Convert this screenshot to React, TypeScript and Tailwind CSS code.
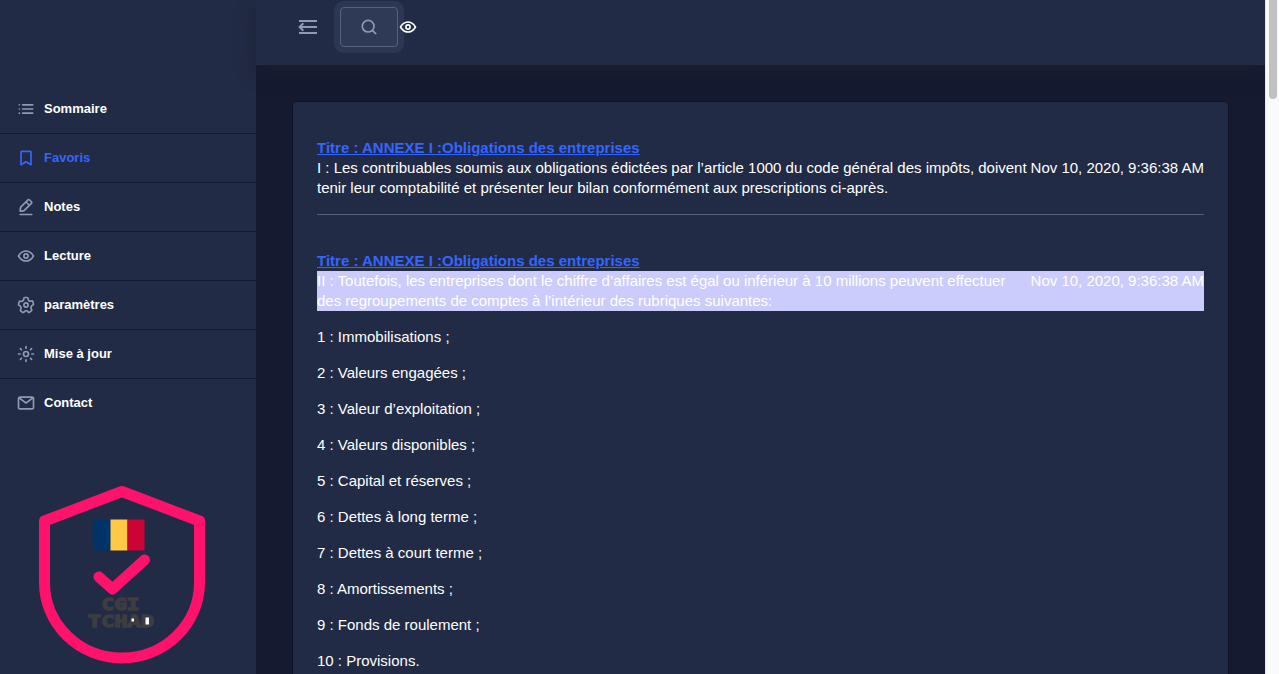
import type { ReactNode } from 'react';

const eye = (
  <>
    <path d="M21.87 11.5c-.64-1.11-4.16-6.68-10.14-6.5-5.53.14-8.73 5-9.6 6.5a1 1 0 0 0 0 1c.63 1.09 4 6.5 9.89 6.5h.25c5.53-.14 8.74-5 9.6-6.5a1 1 0 0 0 0-1zM12.22 17c-4.31.1-7.12-3.59-8-5 1-1.61 3.61-4.9 7.61-5 4.29-.11 7.11 3.59 8 5-1.03 1.61-3.61 4.9-7.61 5z" />
    <path d="M12 8.5a3.5 3.5 0 1 0 3.5 3.5A3.5 3.5 0 0 0 12 8.5zm0 5a1.5 1.5 0 1 1 1.5-1.5 1.5 1.5 0 0 1-1.5 1.5z" />
  </>
);

const items: { label: string; active?: boolean; icon: ReactNode }[] = [
  {
    label: 'Sommaire',
    icon: (
      <>
        <circle cx="4" cy="7" r="1" />
        <circle cx="4" cy="12" r="1" />
        <circle cx="4" cy="17" r="1" />
        <rect x="7" y="11" width="14" height="2" rx=".94" />
        <rect x="7" y="16" width="14" height="2" rx=".94" />
        <rect x="7" y="6" width="14" height="2" rx=".94" />
      </>
    ),
  },
  {
    label: 'Favoris',
    active: true,
    icon: (
      <path
        d="M6 20V5.3A1.25 1.25 0 0 1 7.2 4h9.6A1.25 1.25 0 0 1 18 5.3V20l-6-3.6z"
        fill="none"
        stroke="currentColor"
        strokeWidth="2"
        strokeLinejoin="round"
      />
    ),
  },
  {
    label: 'Notes',
    icon: (
      <>
        <path d="M19 20H5a1 1 0 0 0 0 2h14a1 1 0 0 0 0-2z" />
        <path d="M5 18h.09l4.17-.38a2 2 0 0 0 1.21-.57l9-9a1.92 1.92 0 0 0-.07-2.71L16.66 2.6A2 2 0 0 0 14 2.53l-9 9a2 2 0 0 0-.57 1.21L4 16.91A1 1 0 0 0 5 18zM15.27 4L18 6.73l-2 1.95L13.32 6zm-8.9 8.91L12 7.32l2.7 2.7-5.6 5.6-3 .28z" />
      </>
    ),
  },
  { label: 'Lecture', icon: eye },
  {
    label: 'paramètres',
    icon: (
      <>
        <path d="M8.61 22a2.25 2.25 0 0 1-1.35-.46L5.19 20a2.37 2.37 0 0 1-.49-3.22 2.06 2.06 0 0 0 .23-1.86l-.06-.16a1.83 1.83 0 0 0-1.12-1.22h-.16a2.34 2.34 0 0 1-1.48-2.94L2.93 8a2.18 2.18 0 0 1 1.12-1.41 2.14 2.14 0 0 1 1.68-.12 1.93 1.93 0 0 0 1.78-.29l.13-.1a1.94 1.94 0 0 0 .73-1.51v-.24A2.32 2.32 0 0 1 10.66 2h2.55a2.26 2.26 0 0 1 1.6.67 2.37 2.37 0 0 1 .68 1.68v.28a1.76 1.76 0 0 0 .69 1.43l.11.08a1.74 1.74 0 0 0 1.59.26l.34-.11A2.26 2.26 0 0 1 21.1 7.8l.79 2.52a2.36 2.36 0 0 1-1.46 2.93l-.2.07A1.89 1.89 0 0 0 19 14.6a2 2 0 0 0 .25 1.65l.26.38a2.38 2.38 0 0 1-.5 3.23L17 21.41a2.24 2.24 0 0 1-3.22-.53l-.12-.17a1.75 1.75 0 0 0-1.5-.78 1.8 1.8 0 0 0-1.43.77l-.23.33A2.25 2.25 0 0 1 9 22a2 2 0 0 1-.39 0zM4.4 11.62a3.83 3.83 0 0 1 2.38 2.5v.12a4 4 0 0 1-.46 3.62.38.38 0 0 0 0 .51L8.47 20a.25.25 0 0 0 .37-.07l.23-.33a3.77 3.77 0 0 1 6.2 0l.12.18a.3.3 0 0 0 .18.12.25.25 0 0 0 .19-.05l2.06-1.56a.36.36 0 0 0 .07-.49l-.26-.38A4 4 0 0 1 17.1 14a3.92 3.92 0 0 1 2.49-2.61l.2-.07a.34.34 0 0 0 .19-.44l-.78-2.49a.35.35 0 0 0-.2-.19.21.21 0 0 0-.19 0l-.34.11a3.74 3.74 0 0 1-3.43-.57L15 7.65a3.76 3.76 0 0 1-1.49-3v-.31a.37.37 0 0 0-.1-.26.31.31 0 0 0-.21-.08h-2.54a.31.31 0 0 0-.29.33v.25a3.9 3.9 0 0 1-1.52 3.09l-.13.1a3.91 3.91 0 0 1-3.63.59.22.22 0 0 0-.14 0 .28.28 0 0 0-.12.15L4 11.12a.36.36 0 0 0 .22.45z" />
        <path d="M12 15.5a3.5 3.5 0 1 1 3.5-3.5 3.5 3.5 0 0 1-3.5 3.5zm0-5a1.5 1.5 0 1 0 1.5 1.5 1.5 1.5 0 0 0-1.5-1.5z" />
      </>
    ),
  },
  {
    label: 'Mise à jour',
    icon: (
      <g fill="none" stroke="currentColor" strokeWidth="2" strokeLinecap="round">
        <circle cx="12" cy="12" r="3" />
        <path d="M12 3v2M12 19v2M3 12h2M19 12h2M5.300 5.600l1.300 1.300M17.400 17.100l1.300 1.300M5.300 18.400l1.300-1.300M17.400 6.900l1.300-1.300" />
      </g>
    ),
  },
  {
    label: 'Contact',
    icon: (
      <path d="M19 4H5a3 3 0 0 0-3 3v10a3 3 0 0 0 3 3h14a3 3 0 0 0 3-3V7a3 3 0 0 0-3-3zm-.67 2L12 10.75 5.67 6zM19 18H5a1 1 0 0 1-1-1V7.25l7.4 5.55a1 1 0 0 0 .6.2 1 1 0 0 0 .6-.2L20 7.25V17a1 1 0 0 1-1 1z" />
    ),
  },
];

const rubriques = [
  '1 : Immobilisations ;',
  '2 : Valeurs engagées ;',
  '3 : Valeur d’exploitation ;',
  '4 : Valeurs disponibles ;',
  '5 : Capital et réserves ;',
  '6 : Dettes à long terme ;',
  '7 : Dettes à court terme ;',
  '8 : Amortissements ;',
  '9 : Fonds de roulement ;',
  '10 : Provisions.',
];

function Icon({ children, className }: { children: ReactNode; className: string }) {
  return (
    <svg viewBox="0 0 24 24" fill="currentColor" className={className}>
      {children}
    </svg>
  );
}

function Logo() {
  return (
    <svg width="200" height="190" viewBox="0 0 200 190" className="ml-[25px] mt-[52px] shrink-0">
      <path
        d="M19.5 41 L97 11.500 L174.500 41 V102.500 A77.500 75.500 0 0 1 19.500 102.500 Z"
        fill="none"
        stroke="#ff126a"
        strokeWidth="11"
        strokeLinejoin="round"
      />
      <rect x="69" y="39.500" width="17" height="31" fill="#00336a" />
      <rect x="85.500" y="39.500" width="17" height="31" fill="#ffc846" />
      <rect x="102.500" y="39.500" width="17" height="31" fill="#cc0435" />
      <path d="M74 97 L87.500 109 L119.500 80" fill="none" stroke="#ff126a" strokeWidth="11" strokeLinecap="round" strokeLinejoin="round" />
      <g
        fill="#3d3d40"
        stroke="#3d3d40"
        strokeWidth="1.300"
        fontFamily="'DejaVu Sans Mono', monospace"
        fontWeight="700"
        fontSize="16.500"
      >
        <text x="76.500" y="130" textLength="38" lengthAdjust="spacingAndGlyphs">CGI</text>
        <text x="63" y="147" textLength="66" lengthAdjust="spacingAndGlyphs">TCHAD</text>
      </g>
      <rect x="106.500" y="138.500" width="2.500" height="3" fill="#fff" />
      <rect x="120.500" y="137.500" width="3.500" height="7" fill="#fff" />
    </svg>
  );
}

function EntryTitle() {
  return (
    <a className="block w-[323px] whitespace-nowrap font-bold text-[#3366ff] underline">
      Titre : ANNEXE I :Obligations des entreprises
    </a>
  );
}

export default function App() {
  return (
    <div className="flex h-[674px] w-[1279px] overflow-hidden bg-[#151a30] font-['Liberation_Sans',Arial,sans-serif] text-[15px] leading-5 text-white">
      <aside className="flex w-64 shrink-0 flex-col bg-[#222b45] pt-[85px]">
        <nav>
          {items.map((item, i) => (
            <a
              key={item.label}
              className={`flex h-[49px] items-center gap-2 border-b pl-4 text-[13px] font-bold ${
                i < items.length - 1 ? 'border-[#151a30]' : 'border-transparent'
              } ${item.active ? 'text-[#3366ff]' : 'text-white'}`}
            >
              <Icon className={`size-5 ${item.active ? 'text-[#3366ff]' : 'text-[#8f9bb3]'}`}>{item.icon}</Icon>
              {item.label}
            </a>
          ))}
        </nav>
        <Logo />
      </aside>

      <div className="flex w-[1009px] flex-col">
        <header className="z-10 flex h-[65px] shrink-0 items-start bg-[#222b45] pl-10 pt-[7px] shadow-[0_8px_16px_0_rgba(28,32,48,0.7)]">
          <div className="flex h-10 items-center">
            <svg
              viewBox="0 0 24 24"
              className="size-6 text-[#8f9bb3]"
              fill="none"
              stroke="currentColor"
              strokeWidth="2"
            >
              <path d="M3 6h18M4 12h17M3 18h18" />
              <path d="M7.300 8.300L3.600 12l3.700 3.700" />
            </svg>
            <button className="ml-5 flex h-10 w-[58px] items-center justify-center rounded border border-[#56617d] bg-[#2e3a56] shadow-[0_0_0_6px_#2c3753]">
              <Icon className="size-5 text-[#8f9bb3]">
                <path d="M20.71 19.29l-3.4-3.39A7.92 7.92 0 0 0 19 11a8 8 0 1 0-8 8 7.92 7.92 0 0 0 4.9-1.69l3.39 3.4a1 1 0 0 0 1.42 0 1 1 0 0 0 0-1.42zM5 11a6 6 0 1 1 6 6 6 6 0 0 1-6-6z" />
              </Icon>
            </button>
            <Icon className="z-10 size-5 text-white">{eye}</Icon>
          </div>
        </header>

        <main className="px-9 pt-9">
          <article className="h-[640px] w-[937px] rounded border border-[#101426] bg-[#222b45] px-6 pt-9">
            <EntryTitle />
            <div className="flex justify-between whitespace-nowrap">
              <p>
                I : Les contribuables soumis aux obligations édictées par l’article 1000 du code général des impôts, doivent
                <br />
                tenir leur comptabilité et présenter leur bilan conformément aux prescriptions ci-après.
              </p>
              <time>Nov 10, 2020, 9:36:38 AM</time>
            </div>
            <hr className="mb-9 mt-4 border-[#596075]" />
            <EntryTitle />
            <div className="flex justify-between whitespace-nowrap bg-[#ccccfc]">
              <p>
                II : Toutefois, les entreprises dont le chiffre d’affaires est égal ou inférieur à 10 millions peuvent effectuer
                <br />
                des regroupements de comptes à l’intérieur des rubriques suivantes:
              </p>
              <time>Nov 10, 2020, 9:36:38 AM</time>
            </div>
            <div className="mt-4 flex flex-col gap-4">
              {rubriques.map((r) => (
                <p key={r}>{r}</p>
              ))}
            </div>
          </article>
        </main>
      </div>

      <div className="z-20 flex w-[14px] shrink-0 border-l border-[#e8e8e8] bg-[#fafafa] pl-[3px]">
        <div className="h-[99px] w-2 rounded-b-full bg-[#c1c1c1]" />
      </div>
    </div>
  );
}
